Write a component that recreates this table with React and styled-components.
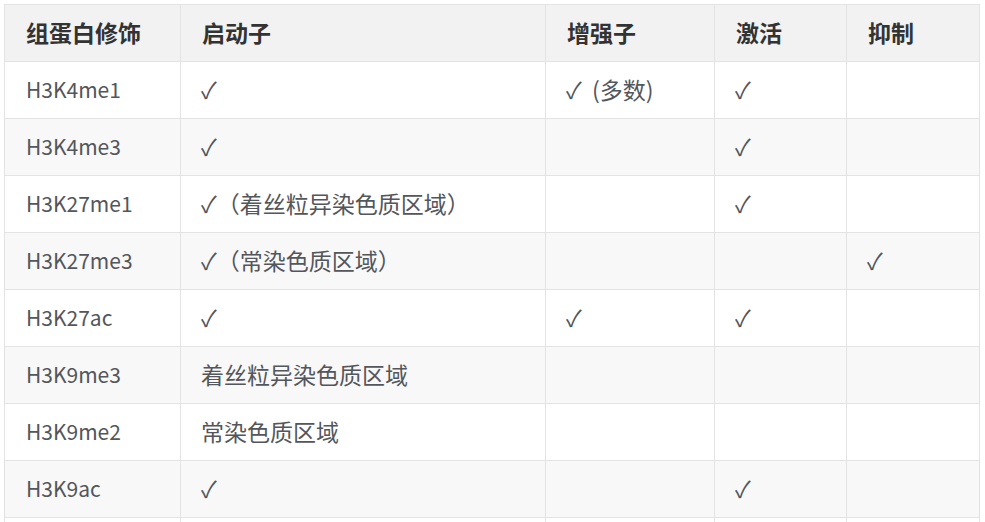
import React from "react";
import styled, { createGlobalStyle } from "styled-components";

const Global = createGlobalStyle`
  html, body { margin: 0; padding: 0; background: #ffffff; }
  body { font-family: "Noto Sans CJK SC", "Open Sans", sans-serif; }
`;

const Page = styled.div`
  padding: 4px 0 0 4px;
  height: 522px;
  overflow: hidden;
  box-sizing: border-box;
`;

const Table = styled.table`
  border-collapse: collapse;
  table-layout: fixed;
  width: 975px;
  font-size: 23px;
`;

const HeadCell = styled.th`
  background: #f2f2f2;
  color: #333333;
  font-weight: 700;
  text-align: left;
  height: 57px;
  padding: 0 0 3px 21px;
  border: 1px solid #e3e3e3;
  box-sizing: border-box;
`;

const Row = styled.tr`
  background: ${(p) => (p.$striped ? "#f8f8f8" : "#ffffff")};
`;

const Cell = styled.td`
  color: #53565b;
  height: 57px;
  padding: 0 0 3px ${(p) => (p.$latin ? "21px" : "20px")};
  border: 1px solid #e3e3e3;
  box-sizing: border-box;
  white-space: pre;
  font-size: ${(p) => (p.$latin ? "21px" : "23px")};
`;

const headers = ["组蛋白修饰", "启动子", "增强子", "激活", "抑制"];
const widths = [176, 365, 169, 132, 133];

const rows = [
  ["H3K4me1", "✓", "✓  (多数)", "✓", ""],
  ["H3K4me3", "✓", "", "✓", ""],
  ["H3K27me1", "✓（着丝粒异染色质区域）", "", "✓", ""],
  ["H3K27me3", "✓（常染色质区域）", "", "", "✓"],
  ["H3K27ac", "✓", "✓", "✓", ""],
  ["H3K9me3", "着丝粒异染色质区域", "", "", ""],
  ["H3K9me2", "常染色质区域", "", "", ""],
  ["H3K9ac", "✓", "", "✓", ""],
  ["", "", "", "", ""],
];

export default function App() {
  return (
    <>
      <Global />
      <Page>
        <Table>
          <colgroup>
            {widths.map((w, i) => (
              <col key={i} style={{ width: w }} />
            ))}
          </colgroup>
          <thead>
            <tr>
              {headers.map((h) => (
                <HeadCell key={h}>{h}</HeadCell>
              ))}
            </tr>
          </thead>
          <tbody>
            {rows.map((r, i) => (
              <Row key={i} $striped={i % 2 === 1}>
                {r.map((c, j) => (
                  <Cell key={j} $latin={j === 0}>
                    {c}
                  </Cell>
                ))}
              </Row>
            ))}
          </tbody>
        </Table>
      </Page>
    </>
  );
}
